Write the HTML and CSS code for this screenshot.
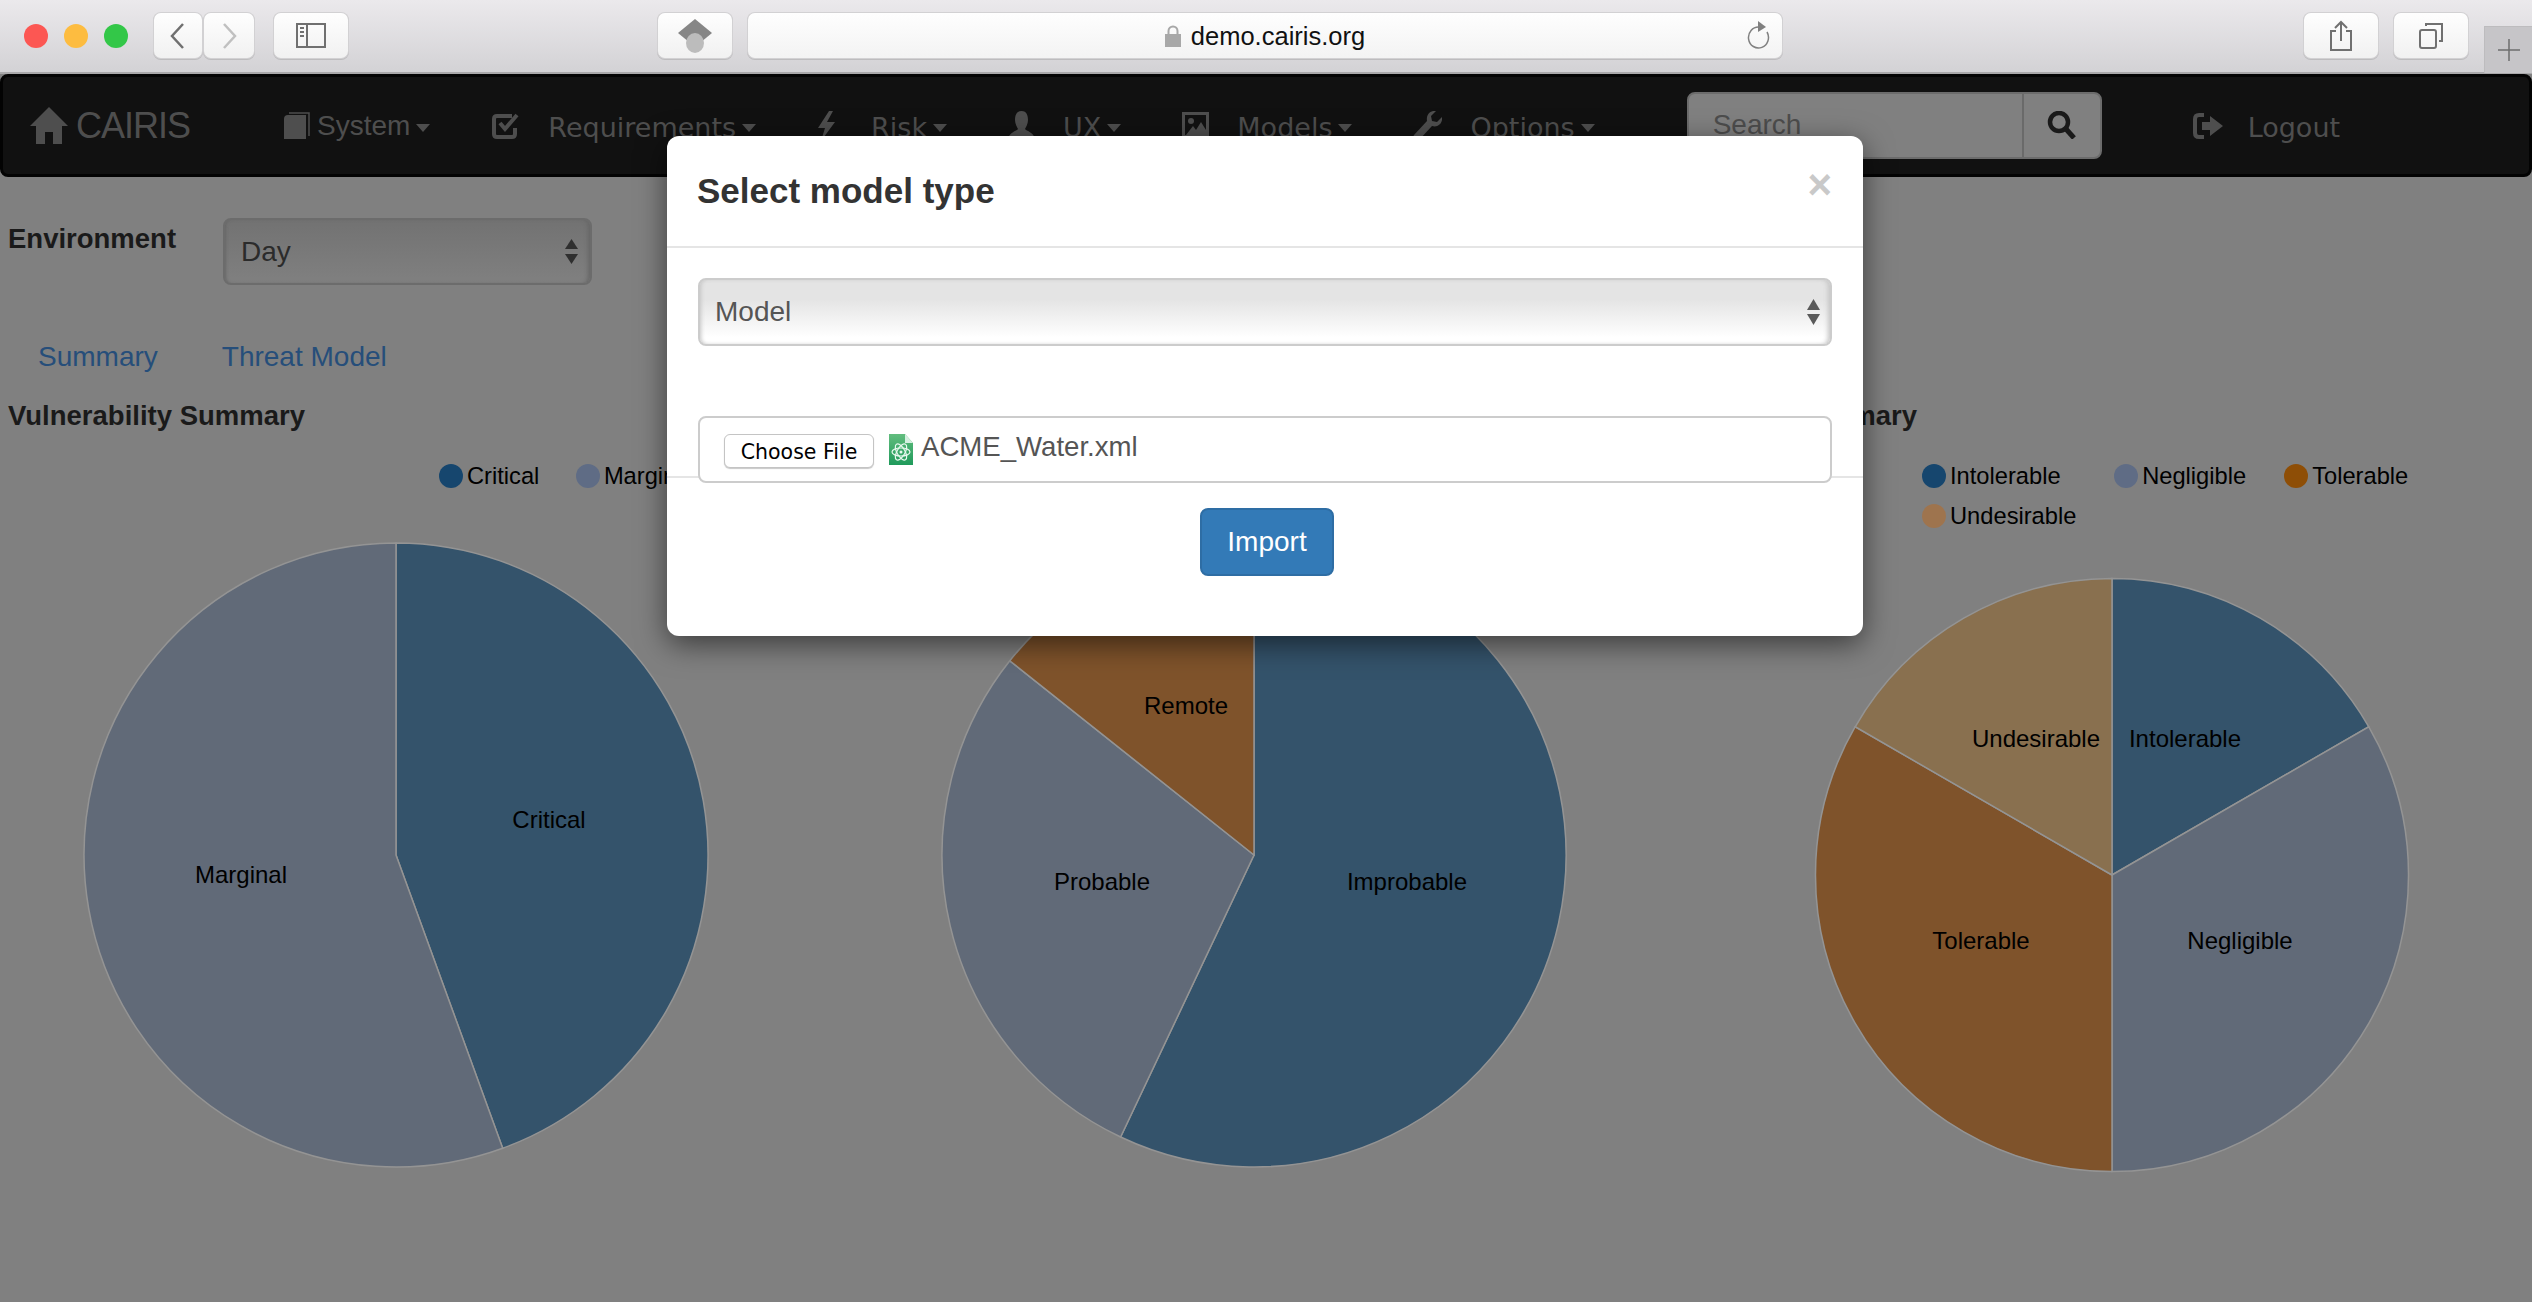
FILE: index.html
```html
<!DOCTYPE html>
<html>
<head>
    <title>CAIRIS</title>
    <link rel="stylesheet" href="styles.css">
</head>
<body>
    <div class="toolbar">
        <div class="lights">
            <span class="light red"></span>
            <span class="light yellow"></span>
            <span class="light green"></span>
        </div>
        <div class="tool back"><svg width="20" height="28" viewBox="0 0 20 28"><path d="M15 2 L4 14 L15 26" fill="none" stroke="#707070" stroke-width="2.5"/></svg></div>
        <div class="tool forward"><svg width="20" height="28" viewBox="0 0 20 28"><path d="M5 2 L16 14 L5 26" fill="none" stroke="#c0c0c0" stroke-width="2.5"/></svg></div>
        <div class="tool sidebar"><svg width="30" height="25" viewBox="0 0 30 25"><path d="M1 1 H29 V24 H1 Z M11 1 V24" fill="none" stroke="#707070" stroke-width="2"/><path d="M4 5 H8 M4 9 H8 M4 13 H8" stroke="#707070" stroke-width="2"/></svg></div>
        <div class="tool shield"><svg width="36" height="34" viewBox="0 0 36 34"><polygon points="18,0 35,14 18,28 1,14" fill="#868686"/><ellipse cx="18" cy="24" rx="9" ry="10" fill="#bcbcbc"/></svg></div>
        <div class="urlbar">
            <svg class="lock" width="16" height="22" viewBox="0 0 16 22"><path d="M3.5 10 V6 a4.500 4.500 0 0 1 9 0 V10" fill="none" stroke="#a8a8a8" stroke-width="2"/><rect y="9" width="16" height="13" fill="#a8a8a8"/></svg>
            <span class="address">demo.cairis.org</span>
            <svg class="reload" width="24" height="30" viewBox="0 0 24 30"><path d="M13 7 A10 10.500 0 1 0 21 12" fill="none" stroke="#808080" stroke-width="1.500"/><polygon points="12,1 20,7 12,12" fill="#808080"/></svg>
        </div>
        <div class="tool share"><svg width="24" height="32" viewBox="0 0 24 32"><path d="M7 11 H2 V30 H22 V11 H17 M12 21 V2 M6 8 L12 2 L18 8" fill="none" stroke="#707070" stroke-width="2"/></svg></div>
        <div class="tool tabs"><svg width="24" height="26" viewBox="0 0 24 26"><rect x="1" y="7" width="16" height="18" rx="2" fill="none" stroke="#707070" stroke-width="2"/><path d="M7 3 V1 H23 V18 H20" fill="none" stroke="#707070" stroke-width="2"/></svg></div>
        <div class="newtab"><svg width="22" height="22" viewBox="0 0 22 22"><path d="M11 0 V22 M0 11 H22" stroke="#6e6e6e" stroke-width="1.500"/></svg></div>
    </div>

    <div class="page">
        <nav class="navbar">
            <a class="brand">
                <svg width="38" height="37" viewBox="0 0 38 37"><path class="glyph" d="M19 0 L38 19 H32 V37 H23 V25 H15 V37 H6 V19 H0 Z"/></svg>
                CAIRIS
            </a>
            <a class="navitem system">
                <svg width="26" height="27" viewBox="0 0 26 27"><path class="glyph" d="M4 3 H22 V27 H0 V7 Q0 3 4 3 Z"/><path d="M5 1 H25 V24" fill="none" stroke="#4e4e4e" stroke-width="1.500"/></svg>
                <span>System</span><i class="caret"></i>
            </a>
            <a class="navitem">
                <svg width="29" height="28" viewBox="0 0 29 28"><path d="M21 4 H6 Q3 4 3 7 V22 Q3 25 6 25 H21 Q24 25 24 22 V16" fill="none" stroke="#4e4e4e" stroke-width="4"/><path d="M9 11 L14 17 L26 3" fill="none" stroke="#4e4e4e" stroke-width="4"/></svg>
                <span class="wide">Requirements</span><i class="caret"></i>
            </a>
            <a class="navitem">
                <svg width="19" height="30" viewBox="0 0 19 30"><polygon class="glyph" points="12,0 1,17 8,17 4,30 18,11 10,11 16,0"/></svg>
                <span class="wide risk">Risk</span><i class="caret"></i>
            </a>
            <a class="navitem">
                <svg width="27" height="30" viewBox="0 0 27 30"><path class="glyph" d="M13.500 0 C19 0 20 5 20 9 C20 13 18 16 17 18 C18 20 27 21 27 30 H0 C0 21 9 20 10 18 C9 16 7 13 7 9 C7 5 8 0 13.500 0 Z"/></svg>
                <span class="wide">UX</span><i class="caret"></i>
            </a>
            <a class="navitem">
                <svg width="27" height="28" viewBox="0 0 27 28"><path class="glyph" fill-rule="evenodd" d="M0 0 H27 V28 H0 Z M3 3 V23 H24 V3 Z"/><circle class="glyph" cx="9" cy="9" r="3"/><polygon class="glyph" points="4,23 11,14 14,18 19,10 24,18 24,23"/></svg>
                <span class="wide">Models</span><i class="caret"></i>
            </a>
            <a class="navitem">
                <svg width="29" height="30" viewBox="0 0 29 30"><path class="glyph" d="M29 6 L24 11 L19 10 L18 5 L23 0 C17 -1 13 4 14 10 L1 24 C-1 27 3 31 6 29 L19 15 C25 17 30 12 29 6 Z"/></svg>
                <span class="wide">Options</span><i class="caret"></i>
            </a>
            <div class="searchbox">
                <span class="searchtext">Search</span>
                <div class="searchbtn"><svg width="30" height="28" viewBox="0 0 30 28"><circle cx="12" cy="11" r="9" fill="none" stroke="#1a1a1a" stroke-width="4.500"/><path d="M19 18 L27 27" stroke="#1a1a1a" stroke-width="5"/></svg></div>
            </div>
            <a class="navitem logout">
                <svg width="30" height="26" viewBox="0 0 30 26"><path d="M11 2 H6 Q2 2 2 6 V20 Q2 24 6 24 H11" fill="none" stroke="#4e4e4e" stroke-width="4"/><polygon class="glyph" points="9,9 17,9 17,3 30,13 17,23 17,17 9,17"/></svg>
                <span class="wide">Logout</span>
            </a>
        </nav>

        <div class="envrow">
            <label class="envlabel">Environment</label>
            <div class="envselect">
                <span>Day</span>
                <svg class="updown" width="13" height="25" viewBox="0 0 13 25"><polygon points="6.500,0 13,10 0,10"/><polygon points="0,15 13,15 6.500,25"/></svg>
            </div>
        </div>

        <div class="pagetabs">
            <a>Summary</a>
            <a>Threat Model</a>
        </div>

        <div class="charts">
            <section class="chart">
                <h2>Vulnerability Summary</h2>
                <div class="legend left">
                    <span class="key"><i class="dot blue"></i>Critical</span>
                    <span class="key"><i class="dot slate"></i>Marginal</span>
                </div>
                <svg class="pie" width="844" height="680" viewBox="0 0 844 680">
                    <g transform="translate(396 325)">
                        <path class="slice-blue" d="M0 0 L0 -312 A312 312 0 0 1 106.700 293.200 Z"/>
                        <path class="slice-slate" d="M0 0 L106.700 293.200 A312 312 0 1 1 0 -312 Z"/>
                        <text x="153" y="-27">Critical</text>
                        <text x="-155" y="28">Marginal</text>
                    </g>
                </svg>
            </section>
            <section class="chart">
                <h2>Threat Summary</h2>
                <div class="legend">
                    <span class="key"><i class="dot blue"></i>Improbable</span>
                    <span class="key"><i class="dot slate"></i>Probable</span>
                    <span class="key"><i class="dot orange"></i>Remote</span>
                </div>
                <svg class="pie" width="844" height="680" viewBox="0 0 844 680">
                    <g transform="translate(410 325)">
                        <path class="slice-blue" d="M0 0 L0 -312 A312 312 0 1 1 -133.400 282 Z"/>
                        <path class="slice-slate" d="M0 0 L-133.400 282 A312 312 0 0 1 -244.200 -194.200 Z"/>
                        <path class="slice-orange" d="M0 0 L-244.200 -194.200 A312 312 0 0 1 0 -312 Z"/>
                        <text x="-68" y="-141">Remote</text>
                        <text x="-152" y="35">Probable</text>
                        <text x="153" y="35">Improbable</text>
                    </g>
                </svg>
            </section>
            <section class="chart">
                <h2 class="risktitle">Risk Summary</h2>
                <div class="legend right">
                    <span class="key intolerable"><i class="dot blue"></i>Intolerable</span>
                    <span class="key negligible"><i class="dot slate"></i>Negligible</span>
                    <span class="key"><i class="dot orange"></i>Tolerable</span>
                    <span class="key"><i class="dot tan"></i>Undesirable</span>
                </div>
                <svg class="pie" width="844" height="680" viewBox="0 0 844 680">
                    <g transform="translate(424 345)">
                        <path class="slice-blue" d="M0 0 L0 -296.500 A296.500 296.500 0 0 1 256.800 -148.250 Z"/>
                        <path class="slice-slate" d="M0 0 L256.800 -148.250 A296.500 296.500 0 0 1 0 296.500 Z"/>
                        <path class="slice-orange" d="M0 0 L0 296.500 A296.500 296.500 0 0 1 -256.800 -148.250 Z"/>
                        <path class="slice-tan" d="M0 0 L-256.800 -148.250 A296.500 296.500 0 0 1 0 -296.500 Z"/>
                        <text x="73" y="-128">Intolerable</text>
                        <text x="-76" y="-128">Undesirable</text>
                        <text x="-131" y="74">Tolerable</text>
                        <text x="128" y="74">Negligible</text>
                    </g>
                </svg>
            </section>
        </div>

        <div class="modal">
            <div class="modalheader">
                <h4>Select model type</h4>
                <span class="close">&times;</span>
            </div>
            <div class="modalbody">
                <div class="modelselect">
                    <span>Model</span>
                    <svg class="updown" width="13" height="26" viewBox="0 0 13 26"><polygon points="6.500,0 13,11 0,11"/><polygon points="0,15 13,15 6.500,26"/></svg>
                </div>
                <div class="filebox">
                    <button class="choosefile">Choose File</button>
                    <svg class="fileicon" width="24" height="31" viewBox="0 0 24 31">
                        <defs>
                            <linearGradient id="filegreen" x1="0" y1="0" x2="0" y2="1">
                                <stop offset="0" stop-color="#62bd7e"/>
                                <stop offset="1" stop-color="#1f9a5b"/>
                            </linearGradient>
                        </defs>
                        <path d="M0 0 H16 L24 9 V31 H0 Z" fill="url(#filegreen)"/>
                        <path d="M16 0 L24 9 H16 Z" fill="#d5efe0"/>
                        <g fill="none" stroke="#e8f8ef" stroke-width="1.200">
                            <ellipse cx="12" cy="18" rx="9" ry="4" transform="rotate(60 12 18)"/>
                            <ellipse cx="12" cy="18" rx="9" ry="4" transform="rotate(-60 12 18)"/>
                            <ellipse cx="12" cy="18" rx="9" ry="4"/>
                        </g>
                        <circle cx="12" cy="18" r="1.500" fill="#e8f8ef"/>
                    </svg>
                    <span class="filename">ACME_Water.xml</span>
                </div>
            </div>
            <div class="modalfooter">
                <button class="import">Import</button>
            </div>
        </div>
    </div>
</body>
</html>
```

FILE: styles.css
```css
html, body {
    margin: 0;
    padding: 0;
}
body {
    width: 2532px;
    height: 1302px;
    overflow: hidden;
    background-color: #808080;
    font-family: "Liberation Sans", Arial, sans-serif;
}

/* browser toolbar */
.toolbar {
    display: flex;
    align-items: flex-start;
    height: 59px;
    padding-top: 13px;
    border-bottom: 2px solid #a9a8aa;
    background: linear-gradient(#ebe9ec, #d3d2d5);
}
.lights {
    display: flex;
    gap: 16px;
    margin: 11px 0 0 24px;
}
.light {
    width: 24px;
    height: 24px;
    border-radius: 50%;
}
.red { background-color: #fc5753; }
.yellow { background-color: #fdbc40; }
.green { background-color: #33c748; }
.tool {
    display: flex;
    align-items: center;
    justify-content: center;
    height: 45px;
    background: linear-gradient(#fefefe, #f1f1f1);
    border-radius: 7px;
    box-shadow: 0 0 0 1px #d2d1d3, 0 1px 0 1px #bdbcbe;
    box-sizing: border-box;
}
.back { width: 48px; margin-left: 26px; }
.forward { width: 50px; margin-left: 2px; }
.sidebar { width: 74px; margin-left: 20px; }
.shield { width: 74px; margin-left: 310px; }
.urlbar {
    display: flex;
    align-items: center;
    justify-content: center;
    position: relative;
    width: 1034px;
    height: 45px;
    margin-left: 16px;
    background: linear-gradient(#fefefe, #f3f3f3);
    border-radius: 7px;
    box-shadow: 0 0 0 1px #d2d1d3, 0 1px 0 1px #bdbcbe;
}
.lock { margin-right: 10px; }
.address {
    padding-top: 2px;
    font-size: 25.500px;
    color: #111;
}
.reload {
    position: absolute;
    right: 12px;
    top: 7px;
}
.share { width: 74px; margin-left: 522px; }
.tabs { width: 74px; margin-left: 16px; }
.newtab {
    display: flex;
    align-items: center;
    justify-content: center;
    width: 47px;
    height: 46px;
    margin: 13px 0 0 16px;
    border-left: 1px solid #bdbcbe;
    border-top: 1px solid #bdbcbe;
    background-color: #c6c5c8;
}

/* page behind the dialog */
.page {
    position: relative;
}
.navbar {
    display: flex;
    align-items: center;
    height: 103px;
    box-sizing: border-box;
    background-color: #111;
    border: 3px solid #030303;
    border-radius: 8px;
    padding-left: 27px;
    color: #4e4e4e;
}
.glyph {
    fill: #4e4e4e;
}
.brand {
    display: flex;
    align-items: center;
    gap: 8px;
    width: 254px;
    font-size: 36px;
    letter-spacing: -1px;
}
.navitem {
    display: flex;
    align-items: center;
    margin-right: 61px;
    font-size: 28px;
}
.navitem span {
    margin-left: 7px;
}
.navitem .wide {
    margin-left: 28px;
    padding-top: 4px;
    font-family: "DejaVu Sans", sans-serif;
    font-size: 27px;
}
.navitem .risk {
    margin-left: 35px;
}
.caret {
    width: 0;
    height: 0;
    margin-left: 6px;
    margin-top: 4px;
    border-left: 7px solid transparent;
    border-right: 7px solid transparent;
    border-top: 8px solid #4e4e4e;
}
.searchbox {
    display: flex;
    width: 415px;
    height: 67px;
    margin-left: 31px;
    margin-top: -1px;
    box-sizing: border-box;
    border: 2px solid #6c6c6c;
    border-radius: 8px;
    background-color: #808080;
}
.searchtext {
    flex: 1;
    padding-left: 24px;
    line-height: 61px;
    font-size: 28px;
    color: #4d4d4d;
}
.searchbtn {
    display: flex;
    align-items: center;
    justify-content: center;
    width: 76px;
    border-left: 2px solid #6a6a6a;
}
.logout {
    margin: 0 0 0 91px;
}
.logout .wide {
    margin-left: 25px;
}

.envrow {
    display: flex;
    margin-top: 41px;
    padding-left: 8px;
}
.envlabel {
    width: 215px;
    margin-top: 5px;
    font-size: 27.500px;
    font-weight: bold;
    line-height: 32px;
    color: #1a1a1a;
}
.envselect {
    display: flex;
    align-items: center;
    justify-content: space-between;
    width: 369px;
    height: 67px;
    box-sizing: border-box;
    padding: 0 12px 0 16px;
    border: 2px solid #6c6c6c;
    border-radius: 8px;
    background: linear-gradient(#727272, #808080);
    box-shadow: inset 3px 0 3px -2px #666, inset -4px 0 4px -2px #666;
    font-size: 28px;
    color: #2b2b2b;
}
.updown {
    fill: #2f2f2f;
}
.pagetabs {
    display: flex;
    gap: 64px;
    margin-top: 56px;
    padding-left: 38px;
    font-size: 28px;
    line-height: 32px;
    color: #264e7a;
}
.charts {
    display: grid;
    grid-template-columns: 844px 844px 844px;
    margin-top: 27px;
}
h2 {
    margin: 0;
    padding-left: 8px;
    font-size: 27.500px;
    line-height: 32px;
    color: #1a1a1a;
}
.risktitle {
    padding-left: 38px;
}
.legend {
    display: flex;
    flex-wrap: wrap;
    align-content: flex-start;
    gap: 0 36.500px;
    height: 79px;
    margin-top: 24px;
    font-size: 23.700px;
    color: #000;
}
.legend.left {
    padding-left: 439px;
}
.legend.right {
    padding-left: 234px;
}
.key {
    display: flex;
    align-items: center;
    gap: 4px;
    height: 40px;
    line-height: 24px;
}
.intolerable { margin-right: 17px; }
.negligible { margin-right: 1.500px; }
.dot {
    width: 24px;
    height: 24px;
    border-radius: 50%;
}
.dot.blue { background-color: #16466e; }
.dot.slate { background-color: #5f6c85; }
.dot.orange { background-color: #8e4e06; }
.dot.tan { background-color: #9e744e; }
.pie {
    display: block;
    margin-top: -5px;
}
.pie path {
    stroke: #949494;
    stroke-width: 1.500;
}
.pie text {
    font-size: 24px;
    text-anchor: middle;
    fill: #000;
}
.slice-blue { fill: #34536b; }
.slice-slate { fill: #616a78; }
.slice-orange { fill: #7f532b; }
.slice-tan { fill: #89704f; }

/* select model dialog */
.modal {
    position: absolute;
    left: 667px;
    top: 62px;
    width: 1196px;
    height: 500px;
    background-color: #fff;
    border-radius: 12px;
    box-shadow: 0 8px 30px rgba(0, 0, 0, 0.55);
    color: #333;
}
.modalheader {
    display: flex;
    align-items: flex-start;
    justify-content: space-between;
    height: 110px;
    padding: 0 31px 0 30px;
    border-bottom: 2px solid #e5e5e5;
}
.modalheader h4 {
    margin: 35px 0 0;
    font-size: 35px;
    line-height: 40px;
}
.close {
    margin-top: 25px;
    font-size: 42px;
    font-weight: bold;
    line-height: 48px;
    color: #c9c9c9;
}
.modalbody {
    height: 198px;
    padding: 30px 31px 0;
}
.modelselect {
    display: flex;
    align-items: center;
    justify-content: space-between;
    height: 68px;
    box-sizing: border-box;
    padding: 0 10px 0 15px;
    border: 2px solid #ccc;
    border-radius: 8px;
    background: linear-gradient(#e4e4e4 30%, #fff 90%);
    box-shadow: inset 3px 0 4px -2px #c4c4c4, inset -4px 0 5px -2px #c4c4c4;
    font-size: 28px;
    color: #555;
}
.modelselect .updown {
    fill: #5a5a5a;
}
.filebox {
    display: flex;
    align-items: flex-start;
    position: relative;
    height: 67px;
    box-sizing: border-box;
    margin-top: 70px;
    padding: 16px 0 0 24px;
    background-color: #fff;
    border: 2px solid #ccc;
    border-radius: 8px;
    font-size: 27.600px;
    color: #555;
}
.choosefile {
    width: 150px;
    height: 34px;
    padding: 1px 0 0;
    background-color: #fff;
    border: 1px solid #c4c4c4;
    border-radius: 6px;
    box-shadow: 0 1px 1px #c8c8c8;
    font-family: "DejaVu Sans", sans-serif;
    font-size: 20.500px;
    color: #000;
}
.fileicon {
    margin-left: 15px;
}
.filename {
    margin-left: 8px;
    margin-top: -1px;
    line-height: 28px;
}
.modalfooter {
    display: flex;
    justify-content: center;
    padding: 30px 0 0 4px;
    border-top: 2px solid #e5e5e5;
}
.import {
    width: 134px;
    height: 68px;
    padding: 0;
    background-color: #337ab7;
    border: 2px solid #2e6da4;
    border-radius: 8px;
    font-family: "Liberation Sans", Arial, sans-serif;
    font-size: 28px;
    color: #fff;
}
```
